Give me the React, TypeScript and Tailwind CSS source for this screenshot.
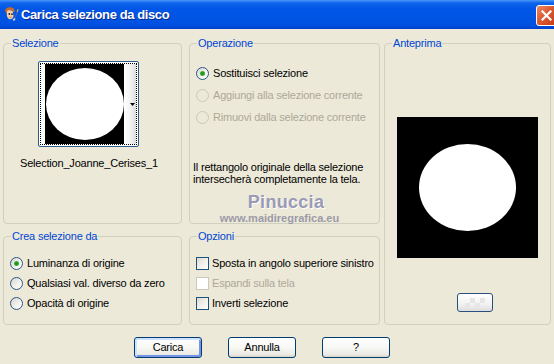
import clsx from "clsx";

function TitleIcon() {
  return (
    <svg width="16" height="16" viewBox="0 0 16 16">
      <path d="M2 5 C2 1.5 6 0.5 9 1.5 C11 2 12 4 11.5 6 L10 6 L9 4 L5 5 L4 8 Z" fill="#c8692a" />
      <path d="M4 6 C4 4.5 5 4 6.5 4.2 L9.5 4.8 L10 7 L10.5 10 C10 12.5 8.5 13.5 6.8 13.2 C5 12.8 4 11 3.8 9 Z" fill="#f7cfa6" />
      <circle cx="6.3" cy="8" r="0.9" fill="#222" />
      <circle cx="9" cy="8.2" r="0.9" fill="#222" />
      <path d="M6.5 11 Q7.5 11.8 8.5 11" stroke="#b0402a" strokeWidth="0.8" fill="none" />
      <path d="M11 13.5 L15 5" stroke="#3a5fc8" strokeWidth="1.6" />
      <path d="M14.3 6.2 L15.6 3.4 L14.8 3 L13.6 5.8 Z" fill="#f0c040" />
      <path d="M10.4 14.6 L11.8 12.6" stroke="#d8d8d8" strokeWidth="1.8" />
    </svg>
  );
}

function TitleBar() {
  return (
    <div className="flex h-[29px] items-start overflow-hidden bg-[linear-gradient(180deg,#4a97fb_0%,#1064ea_10%,#0056e6_30%,#0054e4_70%,#004fdf_88%,#003fcb_100%)] pl-[3px]">
      <span className="mt-[6px]">
        <TitleIcon />
      </span>
      <span className="ml-[2px] mt-[7px] text-[13px] font-bold leading-[15px] tracking-[-0.4px] text-white [text-shadow:1px_1px_#0c2a8c]">
        Carica selezione da disco
      </span>
      <span className="ml-auto mr-[-3px] mt-[5px] flex h-[21px] w-[21px] items-center justify-center rounded-[3px] border border-white bg-[linear-gradient(135deg,#ec8a68_0%,#dd5a30_45%,#c53c14_100%)]">
        <svg width="11" height="11" viewBox="0 0 11 11">
          <path d="M1.5 1.5 L9.5 9.5 M9.5 1.5 L1.5 9.5" stroke="#fff" strokeWidth="2.2" strokeLinecap="square" />
        </svg>
      </span>
    </div>
  );
}

function GroupBox({ title, className, children }: { title: string; className?: string; children?: React.ReactNode }) {
  return (
    <fieldset className={clsx("min-w-0 rounded-[4px] border border-[#d0d0bf]", className)}>
      <legend className="ml-[7px] px-[1px] text-[#0046d5]">{title}</legend>
      {children}
    </fieldset>
  );
}

function Radio({ checked, disabled }: { checked?: boolean; disabled?: boolean }) {
  return (
    <span
      className={clsx(
        "flex h-[13px] w-[13px] shrink-0 items-center justify-center rounded-full border",
        disabled
          ? "border-[#cac8bb] bg-transparent"
          : "border-[#2c5787] bg-[linear-gradient(135deg,#d8d6cc_0%,#f4f3ee_60%,#ffffff_100%)]"
      )}
    >
      {checked && <span className="h-[5px] w-[5px] rounded-full bg-[radial-gradient(circle,#1c9a1c_35%,#6acc6a_100%)]" />}
    </span>
  );
}

function Checkbox({ disabled }: { disabled?: boolean }) {
  return (
    <span
      className={clsx(
        "h-[13px] w-[13px] shrink-0 border",
        disabled
          ? "border-[#cac8bb] bg-white"
          : "border-[#1c5180] bg-[linear-gradient(135deg,#dcdad0_0%,#f4f3ee_60%,#ffffff_100%)]"
      )}
    />
  );
}

function RadioRow({ label, checked, disabled, h = "h-[20px]" }: { label: string; checked?: boolean; disabled?: boolean; h?: string }) {
  return (
    <div className={clsx("flex items-center gap-[4px]", h)}>
      <Radio checked={checked} disabled={disabled} />
      <span className={disabled ? "text-[#aca899]" : "text-black"}>{label}</span>
    </div>
  );
}

function CheckRow({ label, disabled }: { label: string; disabled?: boolean }) {
  return (
    <div className="flex h-[20px] items-center gap-[3px]">
      <Checkbox disabled={disabled} />
      <span className={disabled ? "text-[#aca899]" : "text-black"}>{label}</span>
    </div>
  );
}

function Button({ label, isDefault }: { label: string; isDefault?: boolean }) {
  return (
    <button
      className={clsx(
        "h-[21px] w-[68px] rounded-[3px] border border-[#003c74] bg-[linear-gradient(180deg,#ffffff_0%,#f7f7f4_50%,#ecebe4_85%,#d8d4c8_100%)] text-[11px] leading-[13px] text-black",
        isDefault && "shadow-[inset_1px_1px_0_1px_#cde2fc,inset_-1px_-1px_0_1px_#7393e6]"
      )}
    >
      {label}
    </button>
  );
}

function Thumbnail() {
  return (
    <div className="ml-[34px] mt-[11px] w-[101px] rounded-[2px] border border-[#2e5a8c] bg-white p-[1px]">
      <div className="flex border border-dotted border-black pl-[4px]">
        <div className="flex h-[80px] w-[79px] items-center justify-center bg-black">
          <div className="h-[72px] w-[78px] rounded-[50%] bg-white" />
        </div>
        <div className="flex w-[12px] items-center justify-end bg-[linear-gradient(90deg,#ffffff_0%,#f0f0f0_60%,#dcdcdc_100%)] pr-[1px] pt-[1px]">
          <svg width="5" height="3" viewBox="0 0 5 3">
            <path d="M0 0 L5 0 L2.5 3 Z" fill="#000" />
          </svg>
        </div>
      </div>
    </div>
  );
}

export default function App() {
  return (
    <div className="h-[364px] w-[554px] overflow-hidden bg-[#ece9d8] font-['Liberation_Sans',Arial,sans-serif] text-[11px] leading-[13px] tracking-[-0.2px] text-black">
      <TitleBar />
      <div className="flex px-[3px] pt-[8px]">
        <div className="grid grid-cols-[179px_191px] grid-rows-[187px_95px] gap-x-[7px] gap-y-[6px]">
          <GroupBox title="Selezione">
            <Thumbnail />
            <p className="mt-[10px] pl-[16px]">Selection_Joanne_Cerises_1</p>
          </GroupBox>

          <GroupBox title="Operazione">
            <div className="pl-[6px] pt-[12px]">
              <RadioRow label="Sostituisci selezione" checked h="h-[22px]" />
              <RadioRow label="Aggiungi alla selezione corrente" disabled h="h-[22px]" />
              <RadioRow label="Rimuovi dalla selezione corrente" disabled h="h-[22px]" />
            </div>
            <p className="mt-[33px] pl-[3px] leading-[12px]">
              Il rettangolo originale della selezione
              <br />
              intersecherà completamente la tela.
            </p>
            <div className="mt-[7px] flex flex-col items-center">
              <span className="pl-[3px] text-[18px] font-bold leading-[20px] tracking-[0.3px] text-[#9a9ab6] [text-shadow:1px_1px_#ffffff]">
                Pinuccia
              </span>
              <span className="pr-[10px] text-[11px] font-bold leading-[13px] tracking-[0px] text-[#9c9aa8]">
                www.maidiregrafica.eu
              </span>
            </div>
          </GroupBox>

          <GroupBox title="Crea selezione da">
            <div className="pl-[6px] pt-[10px]">
              <RadioRow label="Luminanza di origine" checked />
              <RadioRow label="Qualsiasi val. diverso da zero" />
              <RadioRow label="Opacità di origine" />
            </div>
          </GroupBox>

          <GroupBox title="Opzioni">
            <div className="pl-[6px] pt-[10px]">
              <CheckRow label="Sposta in angolo superiore sinistro" />
              <CheckRow label="Espandi sulla tela" disabled />
              <CheckRow label="Inverti selezione" />
            </div>
          </GroupBox>
        </div>

        <GroupBox title="Anteprima" className="ml-[4px] h-[288px] w-[167px]">
          <div className="mx-auto mt-[67px] flex h-[141px] w-[141px] items-center justify-center bg-black">
            <div className="h-[87px] w-[97px] rounded-[50%] bg-white" />
          </div>
          <div className="ml-[72px] mt-[35px] flex h-[19px] w-[36px] items-center justify-center overflow-hidden rounded-[3px] border border-[#2b4f7e] bg-[linear-gradient(180deg,#ffffff_0%,#f2f2f2_60%,#dddddd_100%)]">
            <svg width="20" height="10" viewBox="0 0 20 10">
              <rect x="5" y="0" width="5" height="5" fill="#e6e6e6" />
              <rect x="15" y="0" width="5" height="5" fill="#e6e6e6" />
              <rect x="0" y="5" width="5" height="5" fill="#e6e6e6" />
              <rect x="10" y="5" width="5" height="5" fill="#e6e6e6" />
            </svg>
          </div>
        </GroupBox>
      </div>

      <div className="mt-[12px] flex gap-[26px] pl-[134px]">
        <Button label="Carica" isDefault />
        <Button label="Annulla" />
        <Button label="?" />
      </div>
    </div>
  );
}
